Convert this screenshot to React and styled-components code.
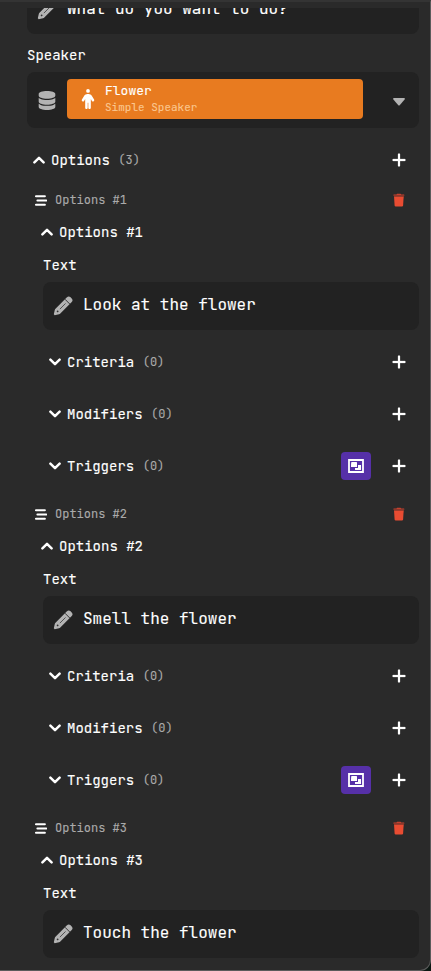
import React from "react";
import styled, { createGlobalStyle } from "styled-components";
import { FaPlus, FaDatabase, FaPerson } from "react-icons/fa6";

const GlobalStyle = createGlobalStyle`
  * { box-sizing: border-box; }
  body { margin: 0; background: #0b1712; overflow: hidden; }
`;

const Panel = styled.main`
  width: 431px;
  height: 971px;
  padding-top: 6px;
  background: #2a2a2a;
  border: 1px solid #5b5b5b;
  border-top: 2px solid #343434;
  border-left: 0;
  border-radius: 0 0 11px 0;
  color: #fff;
  font-family: "JetBrains Mono", "DejaVu Sans Mono", monospace;
  -webkit-text-stroke: 0.12px currentColor;
  overflow: hidden;
`;

const ScrollArea = styled.div`
  height: 962px;
  padding: 0 11px 0 27px;
  overflow: hidden;
`;

const Content = styled.div`
  margin-top: -22px;
`;

const Field = styled.div`
  display: flex;
  align-items: center;
  height: 48px;
  padding: 0 10px;
  gap: 10px;
  border-radius: 8px;
  background: #222;
  font-size: 16px;
  line-height: 20px;
  white-space: pre;
`;

const FieldText = styled.span`
  margin-top: -2px;
`;

const PencilSvg = styled.svg`
  width: 20px;
  height: 20px;
  flex: none;
`;

const Label = styled.div`
  height: ${(p) => p.$height}px;
  line-height: ${(p) => p.$height}px;
  padding-top: ${(p) => p.$drop || 0}px;
  font-size: 14px;
`;

const SpeakerSelect = styled(Field)`
  height: 56px;
  margin-bottom: 8px;
  padding: 0 14px 0 10px;
`;

const DatabaseIcon = styled(FaDatabase)`
  width: 20px;
  height: 19px;
  color: #b3b3b3;
  flex: none;
`;

const SpeakerCard = styled.div`
  display: flex;
  align-items: center;
  width: 296px;
  height: 40px;
  margin-top: -2px;
  padding-left: 11px;
  gap: 7px;
  border-radius: 4px;
  background: #e87b20;

  svg { width: 20px; height: 20px; color: #fff; }
`;

const SpeakerName = styled.div`
  font-size: 13px;
  line-height: 16px;
`;

const SpeakerKind = styled.div`
  font-size: 11px;
  line-height: 16px;
  color: #fbc78f;
`;

const SelectArrow = styled.svg`
  width: 12px;
  height: 8px;
  margin: 3px 0 0 auto;
`;

const SectionRow = styled.div`
  display: flex;
  align-items: center;
  height: ${(p) => p.$height}px;
  padding-left: ${(p) => p.$indent}px;
  padding-right: 12px;
  font-size: 14px;
  white-space: pre;
`;

const ChevronSvg = styled.svg`
  width: 12px;
  height: 8px;
  margin-right: 6px;
  transform: ${(p) => (p.$open ? "none" : "rotate(180deg)")};
`;

const Count = styled.span`
  margin-left: 8.5px;
  font-size: 12px;
  color: #aaa;
`;

const Actions = styled.div`
  display: flex;
  align-items: center;
  gap: 20px;
  margin-left: auto;
`;

const AddIcon = styled(FaPlus)`
  width: 16px;
  height: 16px;
  stroke: currentColor;
  stroke-width: 8px;
`;

const GroupButton = styled.span`
  display: flex;
  align-items: center;
  justify-content: center;
  width: 30px;
  height: 28px;
  border-radius: 4px;
  background: #5630a8;
`;

const ItemRow = styled.div`
  display: flex;
  align-items: center;
  height: 32px;
  padding: 0 14px 0 8px;
  gap: 8px;
  font-size: 12px;
  color: #aaa;
`;

const TrashSvg = styled.svg`
  width: 12px;
  height: 14px;
  margin-left: auto;
`;

const OptionBlock = styled.section`
  margin-bottom: 6px;
`;

const OptionBody = styled.div`
  padding-left: 16px;
  margin-bottom: 6px;
`;

function Trash() {
  return (
    <TrashSvg viewBox="0 0 12 14">
      <path d="M1 3.5H10.7L10.1 12.4Q10 13.5 9 13.5H2.7Q1.7 13.5 1.6 12.4Z" fill="#e84c32" />
      <path d="M4 .7H7.6L8.2 1.5H11Q11.4 1.5 11.4 1.9V2.6H.3V1.9Q.3 1.5 .7 1.5H3.5Z" fill="#c5412e" />
      <path d="M.9 2.6H10.8L10.7 3.8H1Z" fill="#a53b2b" />
    </TrashSvg>
  );
}

function Pencil() {
  return (
    <PencilSvg viewBox="0 0 20 20">
      <g transform="translate(10 10) rotate(-45)">
        <path d="M-12.4 .6V-.6L-8.6 -3Q-8 -3.4 -7.2 -3.4H8.6Q11.5 -3.4 11.5 -.8V.8Q11.5 3.4 8.6 3.4H-7.2Q-8 3.4 -8.6 3Z" fill="#b3b3b3" />
        <path d="M6.2 -3.4V3.4" fill="none" stroke="#303030" strokeWidth=".9" />
        <path d="M-4.4 0H3.6" fill="none" stroke="#404040" strokeWidth=".8" />
        <circle cx="-7.6" cy="0" r=".9" fill="#303030" />
      </g>
    </PencilSvg>
  );
}

function Chevron({ open }) {
  return (
    <ChevronSvg viewBox="0 0 12 8" $open={open}>
      <path d="M1.4 6.3L6 1.8L10.6 6.3" fill="none" stroke="#fff" strokeWidth="2.5" strokeLinecap="round" strokeLinejoin="round" />
    </ChevronSvg>
  );
}

function DragHandle() {
  return (
    <svg width="12" height="11" viewBox="0 0 12 11">
      <path d="M.9 1.3H9.9M2.4 5.5H11.2M.9 9.7H9.9" fill="none" stroke="#fff" strokeWidth="2" strokeLinecap="round" />
    </svg>
  );
}

function GroupIcon() {
  return (
    <svg width="16" height="14" viewBox="0 0 16 14">
      <path fill="none" stroke="#fff" strokeWidth="1.8" d="M1 1H15V13H1Z" />
      <path fill="#fff" d="M3.6 3H8.4Q9 3 9 3.6V8.1H3Q3 3 3.6 3ZM10 6H13V10.5Q13 11 12.5 11H7.5Q7 11 7 10.5V9H10Z" />
    </svg>
  );
}

function Section({ title, count, height, indent, open, group, add = true }) {
  return (
    <SectionRow $height={height} $indent={indent}>
      <Chevron open={open} />
      {title}
      {count !== undefined && <Count>({count})</Count>}
      {add && (
        <Actions>
          {group && <GroupButton><GroupIcon /></GroupButton>}
          <AddIcon />
        </Actions>
      )}
    </SectionRow>
  );
}

function TextField({ children }) {
  return <Field><Pencil /><FieldText>{children}</FieldText></Field>;
}

function Option({ number, text, sections }) {
  return (
    <OptionBlock>
      <ItemRow><DragHandle />Options #{number}<Trash /></ItemRow>
      <Section title={`Options #${number}`} height={32} indent={14} open add={false} />
      <OptionBody>
        <Label $height={34}>Text</Label>
        <TextField>{text}</TextField>
      </OptionBody>
      {sections.map((title) => (
        <Section key={title} title={title} count={0} height={52} indent={22} group={title === "Triggers"} />
      ))}
    </OptionBlock>
  );
}

const sections = ["Criteria", "Modifiers", "Triggers"];
const options = [
  { text: "Look at the flower", sections },
  { text: "Smell the flower", sections },
  { text: "Touch the flower", sections: [] },
];

export default function App() {
  return (
    <>
      <GlobalStyle />
      <Panel>
        <ScrollArea>
          <Content>
            <TextField>What do you want to do?</TextField>
            <Label $height={38} $drop={2}>Speaker</Label>
            <SpeakerSelect>
              <DatabaseIcon />
              <SpeakerCard>
                <FaPerson />
                <div>
                  <SpeakerName>Flower</SpeakerName>
                  <SpeakerKind>Simple Speaker</SpeakerKind>
                </div>
              </SpeakerCard>
              <SelectArrow viewBox="0 0 12 8">
                <path d="M.8 0H11.2Q12.3 .1 11.6 1.4L6.7 7.2Q6 7.9 5.3 7.2L.4 1.4Q-.3 .1 .8 0Z" fill="#b3b3b3" />
              </SelectArrow>
            </SpeakerSelect>
            <Section title="Options" count={3} height={48} indent={6} open />
            {options.map((option, i) => <Option key={option.text} number={i + 1} {...option} />)}
          </Content>
        </ScrollArea>
      </Panel>
    </>
  );
}
